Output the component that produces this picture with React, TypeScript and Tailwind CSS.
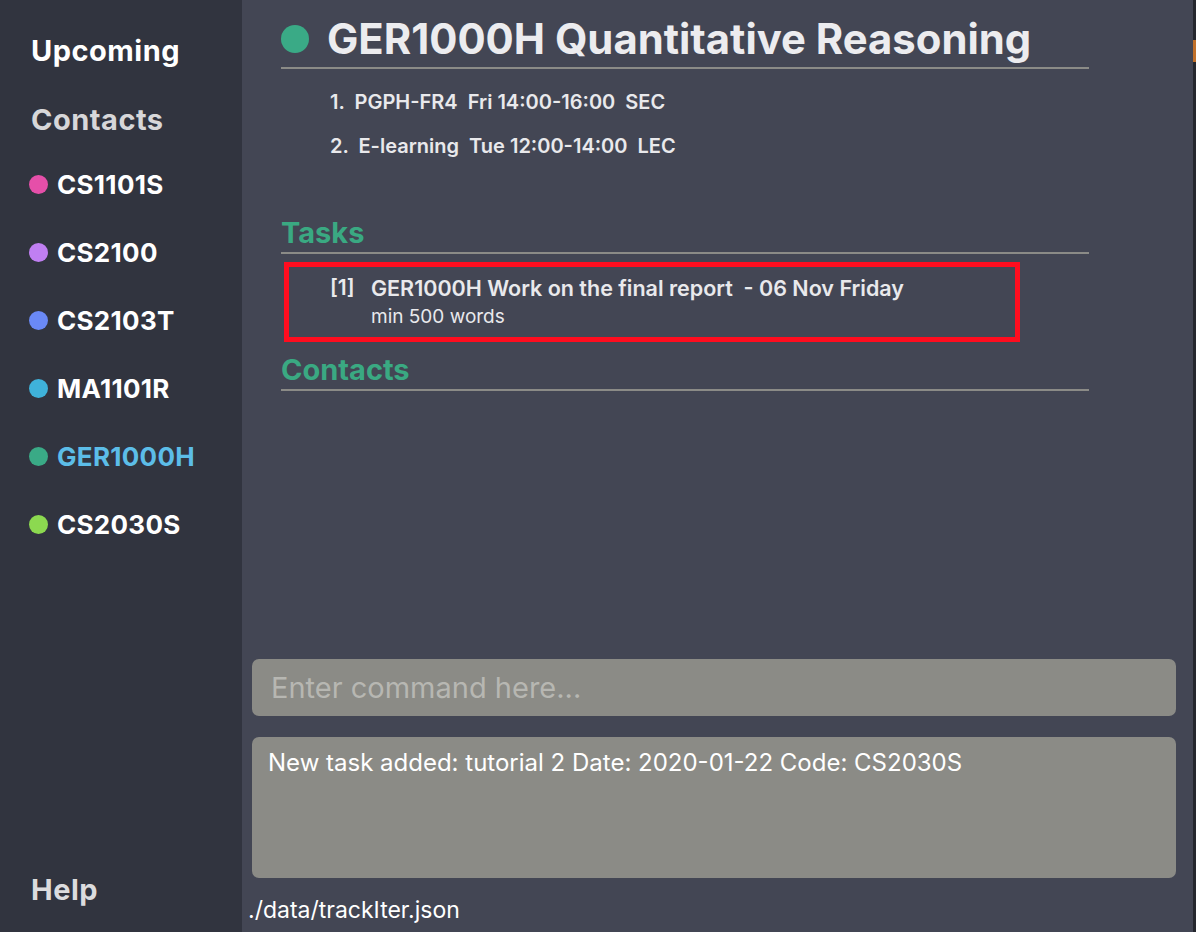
const font = { fontFamily: '"Inter", "Liberation Sans", sans-serif' };

type Module = { code: string; dot: string; active?: boolean };

const modules: Module[] = [
  { code: 'CS1101S', dot: 'bg-[#e54fa9]' },
  { code: 'CS2100', dot: 'bg-[#c07ff2]' },
  { code: 'CS2103T', dot: 'bg-[#6a89f6]' },
  { code: 'MA1101R', dot: 'bg-[#3fb2da]' },
  { code: 'GER1000H', dot: 'bg-[#3aaa86]', active: true },
  { code: 'CS2030S', dot: 'bg-[#8cd950]' },
];

const Sidebar = () => (
  <aside className="w-[242px] shrink-0 h-full bg-[#31343f] flex flex-col pl-[31px]">
    <div className="h-[102px] flex items-center text-[29px] font-bold text-white tracking-[0.5px]">
      Upcoming
    </div>
    <div className="h-[34px] mt-[1px] flex items-center text-[29px] font-bold text-[#d7d7d9] tracking-[0.5px]">
      Contacts
    </div>
    <ul className="mt-[13px] flex flex-col">
      {modules.map((m) => (
        <li key={m.code} className="h-[68px] flex items-center -ml-[2px]">
          <span className={`w-[19px] h-[19px] rounded-full ${m.dot}`} />
          <span
            className={`ml-[9px] text-[26px] font-bold tracking-[0.3px] ${
              m.active ? 'text-[#5cbde8]' : 'text-white'
            }`}
          >
            {m.code}
          </span>
        </li>
      ))}
    </ul>
    <div className="mt-auto h-[84px] text-[29px] font-bold text-[#dcdcde] flex items-start pt-[20px] tracking-[0.5px]">
      Help
    </div>
  </aside>
);

const SectionHeading = ({ title }: { title: string }) => (
  <div className="w-[808px] h-[42px] leading-[42px] border-b-2 border-[#8b8b87] text-[29px] font-bold text-[#3aa982]">
    {title}
  </div>
);

const App = () => {
  return (
    <div style={font} className="w-[1196px] h-[932px] flex overflow-hidden bg-[#434654]">
      <Sidebar />
      <main className="flex-1 h-full flex flex-col">
        <section className="pl-[39px]">
          <header className="w-[808px] h-[69px] flex items-center pt-[11px] border-b-2 border-[#8b8b87]">
            <span className="w-[28px] h-[28px] rounded-full bg-[#3aaa86]" />
            <h1 className="ml-[18px] text-[41.8px] leading-[50px] font-bold text-[#ececef]">
              GER1000H Quantitative Reasoning
            </h1>
          </header>
          <ol className="mt-[11px] pl-[49px] text-[20px] font-semibold text-[#e9e9ec]">
            <li className="h-[44px] flex items-center whitespace-pre">
              1.  PGPH-FR4  Fri 14:00-16:00  SEC
            </li>
            <li className="h-[44px] flex items-center whitespace-pre">
              2.  E-learning  Tue 12:00-14:00  LEC
            </li>
          </ol>
          <div className="mt-[44px]">
            <SectionHeading title="Tasks" />
          </div>
          <div className="mt-[8px] ml-[3px] w-[736px] h-[80px] border-[5px] border-[#ff0d1f] flex pl-[41px] pt-[6px]">
            <span className="w-[41px] text-[21px] font-semibold text-[#e9e9ec] leading-[30px]">[1]</span>
            <div className="flex flex-col">
              <span className="text-[21.5px] font-semibold text-[#e9e9ec] leading-[30px] whitespace-pre">
                GER1000H Work on the final report  - 06 Nov Friday
              </span>
              <span className="text-[19px] text-[#e9e9ec] leading-[28px]">min 500 words</span>
            </div>
          </div>
          <div className="mt-[7px]">
            <SectionHeading title="Contacts" />
          </div>
        </section>
        <section className="mt-auto pl-[10px] pr-[17px]">
          <div className="h-[57px] rounded-[7px] bg-[#8b8b86] flex items-center pl-[19px] text-[29px] text-[#b7b7b2]">
            Enter command here...
          </div>
          <div className="mt-[21px] h-[141px] rounded-[7px] bg-[#8b8b86] px-[16px] pt-[8px] text-[24px] text-white">
            New task added: tutorial 2 Date: 2020-01-22 Code: CS2030S
          </div>
        </section>
        <footer className="h-[54px] pl-[6px] pt-[17px] text-[23px] text-white leading-[30px]">
          ./data/trackIter.json
        </footer>
      </main>
      <div className="w-[3px] h-full bg-[#25272e] flex flex-col">
        <div className="mt-[40px] h-[22px] bg-[#c0702a]" />
      </div>
    </div>
  );
};

export default App;
